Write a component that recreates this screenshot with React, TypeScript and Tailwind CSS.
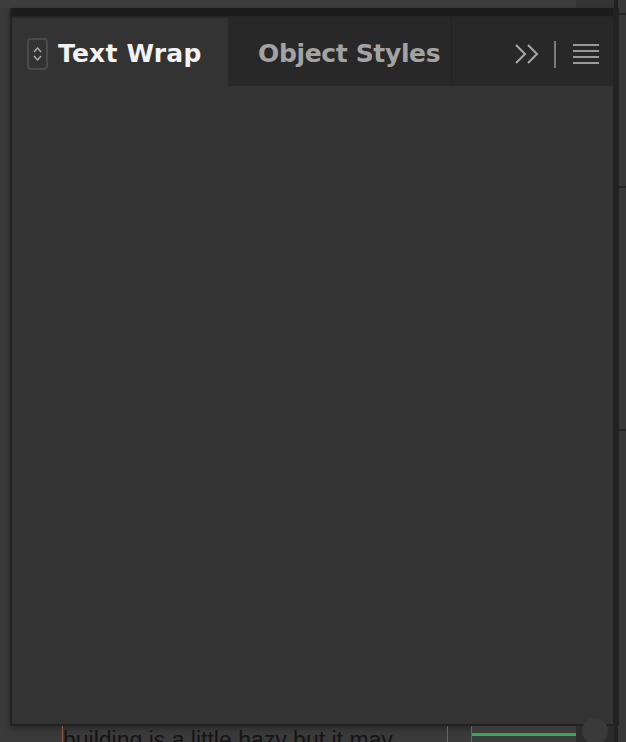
import React from "react";

function StepperIcon() {
  return (
    <div className="flex h-[32px] w-[21px] shrink-0 items-center justify-center rounded-[4px] border-2 border-[#4a4a4a]">
      <svg width="11" height="18" viewBox="0 0 11 18" fill="none" stroke="#b0b0b0" strokeWidth="1.4">
        <path d="M2 7 L5.5 3 L9 7" />
        <path d="M2 11 L5.5 15 L9 11" />
      </svg>
    </div>
  );
}

function PanelControls() {
  return (
    <div className="flex items-center pr-[14px] pt-[4px]">
      <svg width="26" height="22" viewBox="0 0 26 22" fill="none" stroke="#a8a8a8" strokeWidth="2">
        <path d="M2 2 L11 11 L2 20" />
        <path d="M14 2 L23 11 L14 20" />
      </svg>
      <div className="ml-[14px] h-[27px] w-[2px] bg-[#7a7a7a]" />
      <div className="ml-[17px] flex w-[26px] flex-col gap-[4px]">
        <div className="h-[2px] bg-[#9a9a9a]" />
        <div className="h-[2px] bg-[#9a9a9a]" />
        <div className="h-[2px] bg-[#9a9a9a]" />
        <div className="h-[2px] bg-[#9a9a9a]" />
      </div>
    </div>
  );
}

function Panel() {
  return (
    <div className="flex h-[718px] w-[605px] flex-col border-x-2 border-b-2 border-[#222222] bg-[#333333] shadow-[0_2px_6px_rgba(0,0,0,0.35)]">
      <div className="h-[8px] bg-[#1c1c1c]" />
      <div className="flex h-[70px] bg-[#262626] pt-[2px]">
        <div className="flex w-[216px] items-center gap-[10px] bg-[#333333] pl-[15px] pt-[4px]">
          <StepperIcon />
          <span className="font-['DejaVu_Sans',sans-serif] text-[25px] font-bold tracking-[0.2px] text-[#f2f2f2]">
            Text Wrap
          </span>
        </div>
        <div className="flex flex-1 items-center bg-[#282828]">
          <div className="flex h-full w-[224px] items-center border-r border-[#222222] pl-[30px] pt-[4px]">
            <span className="font-['DejaVu_Sans',sans-serif] text-[25px] font-bold tracking-[-0.35px] text-[#a3a3a3]">
              Object Styles
            </span>
          </div>
          <div className="flex flex-1 justify-end">
            <PanelControls />
          </div>
        </div>
      </div>
      <div className="flex-1" />
    </div>
  );
}

function RightRail() {
  return (
    <div className="flex w-[11px]">
      <div className="w-[4px] bg-[#222222]" />
      <div className="flex flex-1 flex-col bg-[#383838]">
        <div className="h-[5px]" />
        <div className="h-[2px] bg-[#262626]" />
        <div className="h-[171px]" />
        <div className="h-[2px] bg-[#262626]" />
        <div className="h-[241px]" />
        <div className="h-[2px] bg-[#262626]" />
      </div>
    </div>
  );
}

export default function App() {
  return (
    <div className="flex h-[742px] w-[626px] flex-col overflow-hidden bg-[#3a3a3a]">
      <div className="flex h-[8px]">
        <div className="w-[576px] bg-[#3e3e3e]" />
        <div className="w-[38px] bg-[#343434]" />
        <div className="w-[4px] bg-[#222222]" />
        <div className="flex-1 bg-[#393939]" />
      </div>
      <div className="flex">
        <div className="w-[10px]" />
        <Panel />
        <RightRail />
      </div>
      <div className="flex h-[16px]">
        <div className="w-[62px]" />
        <div className="w-[1px] bg-[#8c5a48]" />
        <div className="w-[384px] overflow-hidden pt-[3px]">
          <div className="whitespace-nowrap font-['Liberation_Sans',sans-serif] text-[23px] leading-[23px] text-[#141414]">
            building is a little hazy but it may
          </div>
        </div>
        <div className="w-[1px] bg-[#8c5a48]" />
        <div className="w-[23px]" />
        <div className="w-[1px] bg-[#8c5a48]" />
        <div className="flex w-[104px] flex-col bg-[#3c3c3c] pt-[7px]">
          <div className="h-[3px] bg-[#34a853]" />
        </div>
        <div className="flex w-[38px] justify-center bg-[#2c2c2c]">
          <div className="mt-[-8px] h-[26px] w-[26px] rounded-full bg-[#3a3a3a]" />
        </div>
        <div className="w-[4px] bg-[#222222]" />
        <div className="flex-1 bg-[#383838]" />
      </div>
    </div>
  );
}
